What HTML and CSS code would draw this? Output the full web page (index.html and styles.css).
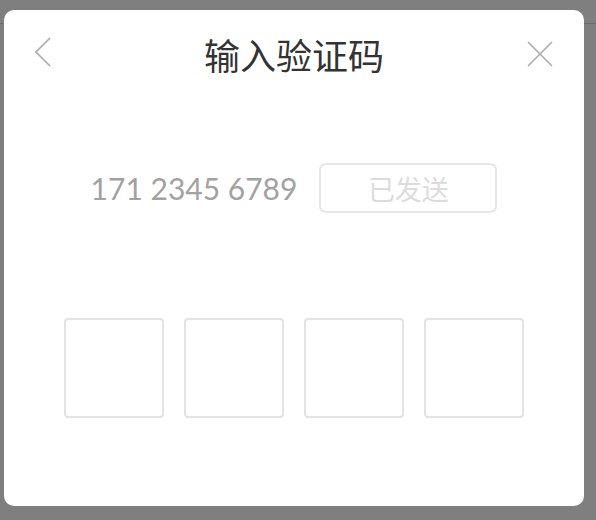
FILE: index.html
```html
<!DOCTYPE html>
<html lang="zh">
<head>
<meta charset="utf-8">
<title>输入验证码</title>
<link rel="stylesheet" href="styles.css">
</head>
<body>
<div class="backdrop">
  <div class="backdrop-bar"></div>
</div>
<div class="modal">
  <div class="modal-header">
    <button class="icon-btn back" aria-label="返回">
      <svg width="16" height="30" viewBox="0 0 16 30"><polyline points="15,1 1,15 15,29" fill="none" stroke="#ababab" stroke-width="1.6"/></svg>
    </button>
    <h1 class="title">输入验证码</h1>
    <button class="icon-btn close" aria-label="关闭">
      <svg width="26" height="26" viewBox="0 0 26 26"><path d="M1 1 L25 25 M25 1 L1 25" fill="none" stroke="#ababab" stroke-width="1.6"/></svg>
    </button>
  </div>
  <div class="phone-row">
    <span class="phone">171 2345 6789</span>
    <button class="send-btn" disabled>已发送</button>
  </div>
  <div class="code-boxes">
    <div class="code-box"></div>
    <div class="code-box"></div>
    <div class="code-box"></div>
    <div class="code-box"></div>
  </div>
</div>
</body>
</html>
```

FILE: styles.css
```css
html, body {
  margin: 0;
  padding: 0;
}
body {
  background: #7f7f7f;
  width: 596px;
  height: 520px;
  overflow: hidden;
  font-family: "Noto Sans CJK SC", "Noto Sans", sans-serif;
}
.backdrop-bar {
  height: 23px;
  border-bottom: 1px solid #6c6c6c;
}
.modal {
  position: absolute;
  left: 4px;
  top: 10px;
  width: 580px;
  height: 496px;
  background: #fff;
  border-radius: 10px;
  display: flex;
  flex-direction: column;
}
.modal-header {
  height: 88px;
  display: grid;
  grid-template-columns: 1fr auto 1fr;
  align-items: center;
  padding: 0 31px;
}
.icon-btn {
  border: 0;
  background: none;
  padding: 0;
  display: flex;
}
.icon-btn.back {
  justify-self: start;
  margin-top: -4px;
}
.icon-btn.close {
  justify-self: end;
}
.title {
  margin: 0;
  font-size: 36px;
  font-weight: 400;
  color: #333;
  line-height: 1;
}
.phone-row {
  margin-top: 65px;
  height: 50px;
  display: flex;
  align-items: center;
  justify-content: center;
  gap: 22px;
}
.phone {
  font-family: Lato, "Liberation Sans", sans-serif;
  font-size: 30px;
  color: #a2a2a2;
}
.send-btn {
  box-sizing: border-box;
  width: 178px;
  height: 50px;
  border: 2px solid #e6e6e6;
  border-radius: 7px;
  background: #fff;
  font-family: "Noto Sans CJK SC", sans-serif;
  font-size: 27px;
  color: #dcdcdc;
  padding: 0;
}
.code-boxes {
  margin-top: 105px;
  display: flex;
  justify-content: center;
  gap: 20px;
}
.code-box {
  box-sizing: border-box;
  width: 100px;
  height: 100px;
  border: 2px solid #e3e3e3;
  border-radius: 4px;
}
```
